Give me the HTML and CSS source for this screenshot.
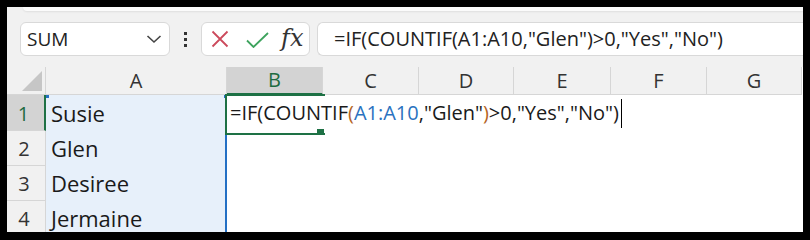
FILE: index.html
```html
<!DOCTYPE html>
<html>
<head>
<meta charset="utf-8">
<link rel="stylesheet" href="styles.css">
</head>
<body>
<div class="frame">
  <div class="ribbon-edge"></div>
  <div class="fbar">
    <div class="namebox">
      <span class="name">SUM</span>
      <svg class="chev" width="16" height="10" viewBox="0 0 16 10"><path d="M1.5 2 L8 8 L14.5 2" fill="none" stroke="#444" stroke-width="1.6"/></svg>
    </div>
    <div class="vdots"><i></i><i></i><i></i></div>
    <div class="fnbox">
      <svg class="ico-x" width="18" height="18" viewBox="0 0 18 18"><path d="M1.5 1.5 L16.5 16.5 M16.5 1.5 L1.5 16.5" stroke="#cc4a5c" stroke-width="1.8" fill="none"/></svg>
      <svg class="ico-check" width="23" height="16" viewBox="0 0 23 16"><path d="M1 8.5 L7.5 15 L22 1" stroke="#3ea35e" stroke-width="1.8" fill="none"/></svg>
      <span class="fx">fx</span>
    </div>
    <div class="formula">=IF(COUNTIF(A1:A10,"Glen")&gt;0,"Yes","No")</div>
  </div>
  <div class="sheet">
    <div class="hd corner"><span class="tri"></span></div>
    <div class="hd col">A</div>
    <div class="hd col active">B</div>
    <div class="hd col">C</div>
    <div class="hd col">D</div>
    <div class="hd col">E</div>
    <div class="hd col">F</div>
    <div class="hd col">G</div>

    <div class="rh active">1</div>
    <div class="ca">Susie<span class="dot dl"></span><span class="dot dr"></span></div>
    <div class="cb edit"><span class="k">=IF(COUNTIF</span><span class="p">(</span><span class="r">A1:A10</span><span class="k">,"Glen"</span><span class="p">)</span><span class="k">&gt;0,"Yes","No")</span><span class="caret"></span><span class="handle"></span></div>
    <div class="c"></div><div class="c"></div><div class="c"></div><div class="c"></div><div class="c"></div>

    <div class="rh">2</div>
    <div class="ca">Glen</div>
    <div class="c"></div><div class="c"></div><div class="c"></div><div class="c"></div><div class="c"></div><div class="c"></div>

    <div class="rh">3</div>
    <div class="ca">Desiree</div>
    <div class="c"></div><div class="c"></div><div class="c"></div><div class="c"></div><div class="c"></div><div class="c"></div>

    <div class="rh">4</div>
    <div class="ca">Jermaine</div>
    <div class="c"></div><div class="c"></div><div class="c"></div><div class="c"></div><div class="c"></div><div class="c"></div>
  </div>
</div>
</body>
</html>
```

FILE: styles.css
```css
* { box-sizing: border-box; }
html, body { margin: 0; padding: 0; }
body {
  background: #000;
  width: 810px;
  height: 240px;
  overflow: hidden;
  font-family: "Open Sans", "Noto Sans", sans-serif;
  color: #222;
}
.frame {
  margin: 7px 0 0 7px;
  width: 796px;
  height: 225px;
  background: #f1f1f1;
  overflow: hidden;
  position: relative;
}
.ribbon-edge {
  position: absolute;
  top: 0;
  left: 16px;
  right: 0;
  height: 4px;
  background: #fbfbfb;
  border-bottom-left-radius: 8px;
  box-shadow: 0 1px 2px rgba(0,0,0,0.08);
}
.fbar {
  height: 60px;
  padding: 15px 0 0 13px;
  display: flex;
  align-items: flex-start;
}
.namebox {
  width: 150px;
  height: 34px;
  background: #fff;
  border: 1px solid #d9d9d9;
  border-radius: 6px;
  display: flex;
  align-items: center;
  justify-content: space-between;
  padding: 0 7px 0 6px;
}
.name { font-size: 19px; color: #222; }
.vdots {
  width: 31px;
  height: 34px;
  display: flex;
  flex-direction: column;
  align-items: center;
  justify-content: center;
  gap: 3px;
}
.vdots i {
  display: block;
  width: 3px;
  height: 3px;
  background: #333;
}
.fnbox {
  width: 109px;
  height: 34px;
  background: #fff;
  border: 1px solid #d9d9d9;
  border-radius: 6px;
  display: flex;
  align-items: center;
  padding: 0 0 0 9px;
}
.ico-x { margin-right: 17px; }
.ico-check { margin-right: 12px; margin-top: 1px; }
.fx {
  font-family: "DejaVu Serif", "Liberation Serif", serif;
  font-style: italic;
  font-size: 24px;
  color: #333;
  line-height: 1;
  margin-top: -2px;
}
.formula {
  margin-left: 7px;
  flex: 1;
  height: 34px;
  background: #fff;
  border: 1px solid #d9d9d9;
  border-right: none;
  border-radius: 6px 0 0 6px;
  font-size: 20px;
  line-height: 32px;
  padding-left: 16px;
  white-space: nowrap;
  color: #222;
}
.sheet {
  display: grid;
  grid-template-columns: 39px 181px 96px 96px 95px 97px 96px 95px;
  grid-template-rows: 28px 36px 35px 35px 35px;
  background: #fff;
}
.hd {
  background: #f1f1f1;
  border-right: 1px solid #d6d6d6;
  border-bottom: 1px solid #d6d6d6;
  font-size: 20px;
  line-height: 27px;
  text-align: center;
  color: #333;
}
.corner { position: relative; }
.tri {
  position: absolute;
  right: 3px;
  bottom: 3px;
  width: 0;
  height: 0;
  border-style: solid;
  border-width: 0 0 20px 20px;
  border-color: transparent transparent #c6c6c6 transparent;
}
.hd.active {
  background: #d3d3d3;
  border-bottom: 2px solid #1e7145;
  color: #1e6b41;
  line-height: 26px;
}
.rh {
  background: #f1f1f1;
  border-right: 1px solid #d6d6d6;
  border-bottom: 1px solid #d6d6d6;
  font-size: 20px;
  line-height: 26px;
  text-align: center;
  color: #333;
  display: flex;
  align-items: flex-end;
  justify-content: center;
  padding-bottom: 3px;
  padding-right: 4px;
}
.rh.active {
  background: #d3d3d3;
  border-right: 2px solid #1e7145;
  color: #1e6b41;
}
.ca {
  background: #e7f0fa;
  border-right: 2px solid #2470c4;
  font-size: 22px;
  padding: 0 0 5px 5px;
  display: flex;
  align-items: flex-end;
  line-height: 26px;
  color: #1a1a1a;
  position: relative;
}
.dot {
  position: absolute;
  top: 0;
  width: 3px;
  height: 3px;
  background: #2470c4;
}
.dl { left: 0; }
.dr { right: -2px; }
.c { background: #fff; }
.cb {
  position: relative;
  z-index: 2;
  white-space: nowrap;
  font-size: 20px;
  line-height: 30px;
  padding: 3px 0 0 3px;
  color: #1a1a1a;
}
.edit::before {
  content: "";
  position: absolute;
  left: -2px;
  top: -1px;
  width: 98px;
  height: 37px;
  border: 2px solid #1e7145;
  border-right: none;
}
.handle {
  position: absolute;
  left: 90px;
  top: 34px;
  width: 7px;
  height: 4px;
  background: #1e7145;
}
.k { color: #1a1a1a; }
.p { color: #b4651f; }
.r { color: #2a72c0; }
.caret {
  display: inline-block;
  width: 1px;
  height: 29px;
  background: #000;
  vertical-align: -8px;
  margin-left: 2px;
}
```
